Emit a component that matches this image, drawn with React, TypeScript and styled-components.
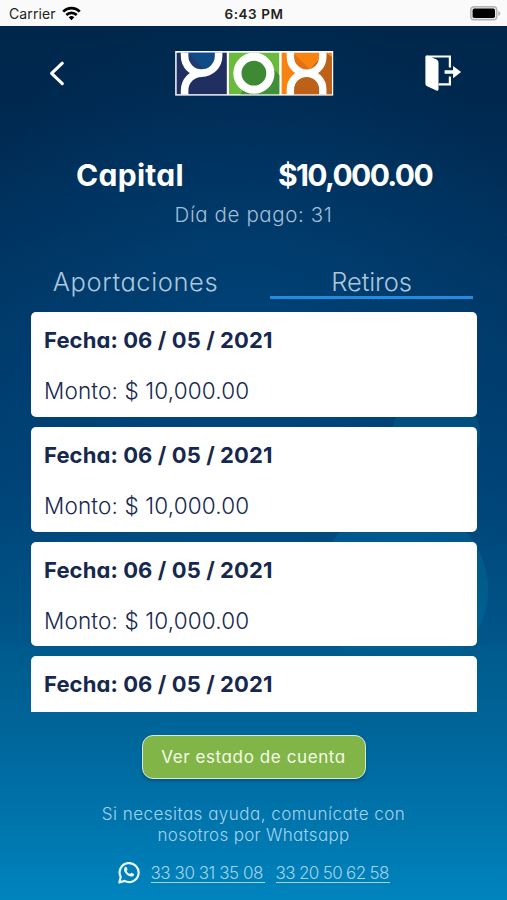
import React from "react";
import styled, { createGlobalStyle } from "styled-components";

const GlobalStyle = createGlobalStyle`
  *, *::before, *::after { box-sizing: border-box; }
  body { margin: 0; }
`;

const Screen = styled.div`
  width: 507px;
  height: 900px;
  overflow: hidden;
  display: flex;
  flex-direction: column;
  font-family: Inter, "Liberation Sans", sans-serif;
  font-feature-settings: "cv11";
  white-space: nowrap;
  color: #fff;
  background:
    linear-gradient(180deg, transparent 640px, #005b8d 655px, #00689d 750px, #007ab2 850px, #0084be 900px),
    radial-gradient(circle 85px at 403px 589px, rgba(0, 122, 165, 0.38) 0, rgba(0, 122, 165, 0.3) 84.5px, transparent 85.5px),
    radial-gradient(circle 44px at 436px 435px, rgba(0, 122, 165, 0.24) 43.5px, transparent 44.5px),
    radial-gradient(ellipse 300px 360px at 245px 350px, rgba(0, 86, 150, 0.34), transparent),
    linear-gradient(180deg, #00264b 25px, #00284f 100px, #003664 280px, #004275 480px, #00568a 640px, #00689d 750px);
`;

const StatusBar = styled.header`
  height: 25.5px;
  flex: none;
  display: grid;
  grid-template-columns: 1fr auto 1fr;
  align-items: center;
  padding: 2px 6px 0 9px;
  background: #fafafa;
  color: #222;
  font-size: 14px;
`;

const Carrier = styled.div`
  display: flex;
  align-items: center;
  gap: 6px;
  letter-spacing: 0.1px;
  font-feature-settings: normal;
`;

const Clock = styled.div`
  padding-right: 2px;
  font-size: 13.5px;
  font-weight: 600;
  letter-spacing: 0.55px;
  font-feature-settings: normal;
`;

const Battery = styled.svg`
  justify-self: end;
`;

const NavBar = styled.nav`
  height: 95px;
  flex: none;
  display: grid;
  grid-template-columns: 1fr auto 1fr;
  align-items: center;
  padding: 0 45px 0 48px;
`;

const IconButton = styled.button<{ $end?: boolean }>`
  display: flex;
  justify-self: ${(p) => (p.$end ? "end" : "start")};
  padding: 0;
  border: 0;
  background: none;
  color: #fff;
`;

const Summary = styled.section`
  height: 112px;
  flex: none;
  padding-top: 35px;
`;

const Balance = styled.div`
  display: flex;
  justify-content: space-between;
  padding: 0 75px 0 76px;
  font-size: 30px;
  line-height: 38px;
  font-weight: 650;
`;

const Label = styled.span<{ $tracking?: number }>`
  letter-spacing: ${(p) => p.$tracking ?? 0}px;
`;

const PayDay = styled.div`
  margin-top: 7px;
  font-size: 20.5px;
  line-height: 27px;
  font-weight: 320;
  text-align: center;
  color: #a3bfd6;
`;

const Tabs = styled.div`
  height: 66px;
  flex: none;
  display: grid;
  grid-template-columns: 209px 203px;
  justify-content: space-between;
  padding: 31px 34px 0 31px;
`;

const Tab = styled.div<{ $active?: boolean }>`
  height: 35px;
  border-bottom: 3px solid ${(p) => (p.$active ? "#248be0" : "transparent")};
  text-align: center;
  font-size: 25.5px;
  line-height: 36px;
  font-weight: 300;
  color: #adc7dc;
`;

const List = styled.main`
  height: 399.5px;
  flex: none;
  margin: 13.5px 30px 1px 31px;
  overflow: hidden;
  display: flex;
  flex-direction: column;
  gap: 10px;
`;

const Card = styled.article`
  height: 104.8px;
  flex: none;
  padding: 14px 13px;
  border-radius: 5px;
  background: #fff;
  color: #172850;
`;

const DateLine = styled.div`
  font-size: 22px;
  line-height: 28px;
  font-weight: 650;
`;

const AmountLine = styled.div`
  margin-top: 23px;
  font-size: 22.5px;
  line-height: 28px;
  font-weight: 300;
`;

const Footer = styled.footer`
  display: flex;
  flex-direction: column;
  align-items: center;
  padding-top: 22px;
`;

const StatementButton = styled.button`
  width: 224px;
  height: 44px;
  padding: 1px 0 0;
  border: 1.5px solid #d5eadb;
  border-radius: 11px;
  background: #82b548;
  box-shadow: 0 2px 3px rgba(0, 35, 70, 0.35);
  color: #f4fbe9;
  font: inherit;
  font-feature-settings: inherit;
  font-size: 17px;
  font-weight: 400;
`;

const Help = styled.p`
  margin: 25px 0 0;
  text-align: center;
  font-size: 17px;
  line-height: 21px;
  font-weight: 350;
  color: #a5d3ee;
`;

const Contacts = styled.div`
  display: flex;
  align-items: center;
  margin-top: 16px;
`;

const Phone = styled.a`
  width: 114px;
  margin-left: 11px;
  border-bottom: 1px solid #a5d3ee;
  font-size: 17px;
  line-height: 18px;
  font-weight: 350;
  color: #a5d3ee;
`;

const WifiIcon = () => (
  <svg width="19" height="15" viewBox="0 0 19 15">
    <g fill="none" stroke="#000" strokeWidth="2.6">
      <path d="M1.2 5.6a11.7 11.7 0 0 1 16.6 0" />
      <path d="M4.3 9a7.4 7.4 0 0 1 10.4 0" />
    </g>
    <path d="M6.7 11.3a4 4 0 0 1 5.6 0L9.5 14.2z" fill="#000" />
  </svg>
);

const BatteryIcon = () => (
  <Battery width="31" height="15" viewBox="0 0 31 15">
    <rect x="0.8" y="0.8" width="26" height="13" rx="3.4" fill="#e8e8e8" stroke="#b2b2b2" strokeWidth="1.4" />
    <rect x="2.6" y="2.6" width="22.4" height="9.4" rx="1.8" fill="#000" />
    <path d="M28.3 5v5c1.2-.5 2-1.4 2-2.5s-.8-2-2-2.5z" fill="#b2b2b2" />
  </Battery>
);

const BackIcon = () => (
  <svg width="18" height="26" viewBox="0 0 18 26">
    <path d="M14.3 3.2 3.6 13.4l10.7 10.2" fill="none" stroke="#fff" strokeWidth="3.1" strokeLinecap="round" strokeLinejoin="round" />
  </svg>
);

const Logo = () => (
  <svg width="161" height="46" viewBox="0 0 161 46">
    <defs>
      <clipPath id="tile"><rect width="50.5" height="42" /></clipPath>
    </defs>
    <rect x="0.2" y="1" width="158" height="44.6" fill="#fff" />
    <g transform="translate(1.4 2.4)" clipPath="url(#tile)">
      <rect width="50.5" height="42" fill="#202f60" />
      <path d="M8 0V4A17 17 0 0 0 42 4V0z" fill="#104b87" />
      <path d="M8 0H11L29 18Q8 24 8 0z" fill="#203b70" />
      <path d="M8.2 -1V3.7A17 17 0 0 0 42.2 3.7V-1M8.2 43V38A17 17.3 0 0 1 25.2 20.7" fill="none" stroke="#fff" strokeWidth="7.6" />
    </g>
    <g transform="translate(53.9 2.4)" clipPath="url(#tile)">
      <rect width="50.5" height="42" fill="#6aba3c" />
      <path d="M37 9L51 23V42H11z" fill="#3e9138" />
      <circle cx="25" cy="20.8" r="16.5" fill="#3d8934" stroke="#fff" strokeWidth="8.2" />
    </g>
    <g transform="translate(106.4 2.4)" clipPath="url(#tile)">
      <rect width="50.5" height="42" fill="#f98310" />
      <path d="M44 0 51 5V42H12V32L25 20.8z" fill="#bd6018" />
      <path d="M11 0 30 18Q9 23 9 0z" fill="#df7118" />
      <path d="M9 -1V4.7A16.2 16 0 0 0 41.4 4.7V-1M9 43V36.8A16.2 16 0 0 1 41.4 36.8V43" fill="none" stroke="#fff" strokeWidth="7.4" />
    </g>
  </svg>
);

const ExitIcon = () => (
  <svg width="38" height="38" viewBox="0 0 38 38">
    <g transform="translate(.6 0)">
      <path d="M2.5 2.5H25.3V13.5M25.3 22.5V30.3H14" fill="none" stroke="#fff" strokeWidth="2.2" />
      <path d="M.8 2.8Q.8 1 2.8 1.6L12 5.6Q13.9 6.5 13.9 8.5V35Q13.9 37.4 11.8 36.4L2.5 32.2Q.8 31.4.8 29.7z" fill="#fff" />
      <path d="M20 16.2H28.5V12L36.5 18 28.5 24.2V19.8H20z" fill="#fff" />
    </g>
  </svg>
);

const WhatsappIcon = () => (
  <svg width="22" height="23" viewBox="0 0 22 23">
    <g transform="translate(0 -1)">
      <path d="M1.3 21.5 2.7 16A9.5 9.5 0 1 1 6.5 19.9z" fill="none" stroke="#e8f8ff" strokeWidth="2.2" strokeLinejoin="round" />
      <path d="M7.2 6.1c.5-.5 1.2-.4 1.5.2l.8 1.9c.1.4 0 .7-.9 1.7.8 1.5 2 2.5 3.5 3.1.9-1.1 1.1-1.3 1.6-1.1l1.9.9c.5.3.6.4.4 1.1-.4 1.3-1.9 1.9-3.2 1.6-3.4-.8-5.5-3-6.6-5.6-.5-1.5 0-2.9 1-3.8z" fill="#e8f8ff" />
    </g>
  </svg>
);

const withdrawals: { id: number; date: string; amount?: string }[] = [
  { id: 1, date: "06 / 05 / 2021", amount: "$ 10,000.00" },
  { id: 2, date: "06 / 05 / 2021", amount: "$ 10,000.00" },
  { id: 3, date: "06 / 05 / 2021", amount: "$ 10,000.00" },
  { id: 4, date: "06 / 05 / 2021" },
];

export default function App() {
  return (
    <>
      <GlobalStyle />
      <Screen>
        <StatusBar>
          <Carrier>Carrier <WifiIcon /></Carrier>
          <Clock>6:43 PM</Clock>
          <BatteryIcon />
        </StatusBar>
        <NavBar>
          <IconButton aria-label="Regresar"><BackIcon /></IconButton>
          <Logo />
          <IconButton $end aria-label="Salir"><ExitIcon /></IconButton>
        </NavBar>
        <Summary>
          <Balance>
            <Label $tracking={0.3}>Capital</Label>
            <Label $tracking={-1.65}>$10,000.00</Label>
          </Balance>
          <PayDay><Label $tracking={0.6}>Día de pago: 31</Label></PayDay>
        </Summary>
        <Tabs>
          <Tab><Label $tracking={0.6}>Aportaciones</Label></Tab>
          <Tab $active><Label $tracking={-0.1}>Retiros</Label></Tab>
        </Tabs>
        <List>
          {withdrawals.map((w) => (
            <Card key={w.id}>
              <DateLine><Label $tracking={0.1}>Fecha: {w.date}</Label></DateLine>
              {w.amount && <AmountLine><Label $tracking={0.15}>Monto: {w.amount}</Label></AmountLine>}
            </Card>
          ))}
        </List>
        <Footer>
          <StatementButton><Label $tracking={0.6}>Ver estado de cuenta</Label></StatementButton>
          <Help>
            <Label $tracking={0.48}>Si necesitas ayuda, comunícate con</Label>
            <br />
            <Label $tracking={0.3}>nosotros por Whatsapp</Label>
          </Help>
          <Contacts>
            <WhatsappIcon />
            <Phone><Label $tracking={-0.45}>33 30 31 35 08</Label></Phone>
            <Phone><Label $tracking={-0.65}>33 20 50 62 58</Label></Phone>
          </Contacts>
        </Footer>
      </Screen>
    </>
  );
}
